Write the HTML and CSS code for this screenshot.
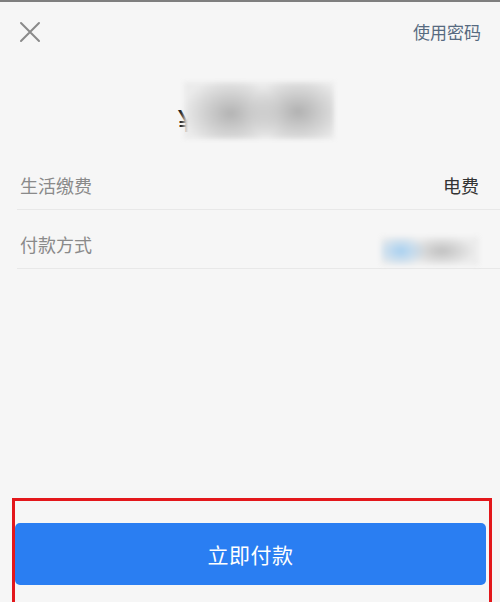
FILE: index.html
```html
<!DOCTYPE html>
<html lang="zh-CN">
<head>
<meta charset="utf-8">
<title>立即付款</title>
<link rel="stylesheet" href="styles.css">
</head>
<body>
<div class="page">
  <div class="topbar"></div>
  <header class="header">
    <svg class="close" width="22" height="22" viewBox="0 0 22 22" aria-label="关闭">
      <path d="M2 2 L20 20 M20 2 L2 20" stroke="#8a8a8a" stroke-width="2" stroke-linecap="round" fill="none"/>
    </svg>
    <span class="pwd">使用密码</span>
  </header>
  <div class="amount">
    <span class="yen">¥</span>
    <div class="blur-amount"></div>
  </div>
  <div class="rows">
    <div class="row">
      <span class="label">生活缴费</span>
      <span class="value">电费</span>
    </div>
    <div class="row">
      <span class="label">付款方式</span>
      <div class="blur-method"></div>
    </div>
  </div>
  <div class="footer">
    <button class="pay">立即付款</button>
  </div>
</div>
</body>
</html>
```
FILE: styles.css
```css
* { box-sizing: border-box; }
html, body { margin: 0; padding: 0; }
body {
  background: #f6f6f6;
  font-family: "Noto Sans CJK SC", "Noto Sans", sans-serif;
  overflow: hidden;
}
.page {
  height: 602px;
  display: flex;
  flex-direction: column;
}
.topbar {
  height: 2px;
  background: #7f7f7f;
}
.header {
  display: flex;
  justify-content: space-between;
  align-items: center;
  padding: 18px 19px 0 19px;
  height: 42px;
}
.close { display: block; }
.pwd {
  font-size: 17px;
  line-height: 20px;
  color: #566a80;
}
.amount {
  display: flex;
  justify-content: center;
  align-items: flex-end;
  height: 95px;
  padding-left: 12px;
  padding-top: 36px;
}
.yen {
  font-size: 32px;
  line-height: 32px;
  color: #222;
  font-family: "Liberation Sans", sans-serif;
  margin-bottom: 2px;
}
.blur-amount {
  position: relative;
  z-index: 1;
  width: 150px;
  height: 57px;
  margin-left: -12px;
  background:
    radial-gradient(ellipse 48px 36px at 31% 55%, #b3b3b3 0%, rgba(205,205,205,0) 100%),
    radial-gradient(ellipse 48px 36px at 76% 52%, #b1b1b1 0%, rgba(205,205,205,0) 100%),
    #ebebeb;
  filter: blur(2px);
}
.rows {
  padding-top: 12px;
}
.row {
  display: flex;
  justify-content: space-between;
  align-items: center;
  margin-left: 17px;
  padding: 24px 21px 14px 3px;
  border-bottom: 1px solid #e8e8e8;
  height: 59px;
}
.label {
  font-size: 18px;
  line-height: 20px;
  color: #8a8a8a;
}
.value {
  font-size: 18px;
  line-height: 20px;
  color: #333;
}
.blur-method {
  width: 98px;
  height: 28px;
  margin-top: 8px;
  margin-bottom: -6px;
  background:
    radial-gradient(ellipse 26px 16px at 20% 50%, #a6cff0 0%, rgba(220,230,240,0) 100%),
    radial-gradient(ellipse 34px 15px at 62% 50%, #c0c0c0 0%, rgba(220,220,220,0) 100%),
    #ececec;
  filter: blur(2.5px);
}
.footer {
  margin: auto 8px 0 12px;
  border: 3px solid #e3171b;
  border-bottom: none;
  padding: 22px 3px 17px 0;
}
.pay {
  display: block;
  width: 100%;
  height: 62px;
  border: none;
  border-radius: 5px;
  background: #2a7ef2;
  color: #fff;
  font-family: "Noto Sans CJK SC", "Noto Sans", sans-serif;
  font-size: 21px;
  letter-spacing: 0.5px;
}
```
